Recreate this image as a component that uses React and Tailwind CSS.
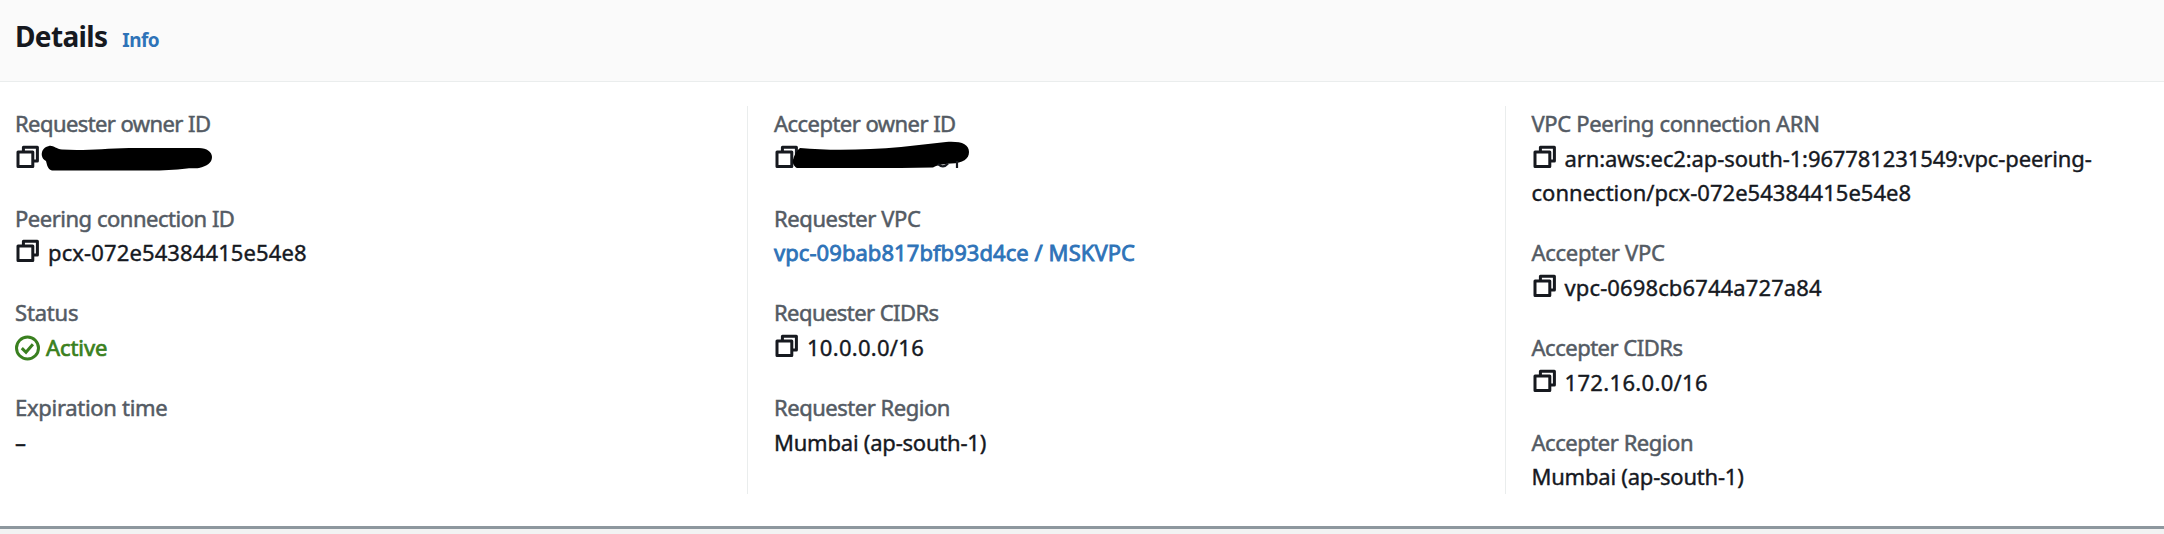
const CopyIcon = () => (
  <svg width="24" height="24" viewBox="0 0 24 24" fill="none" stroke="#16191f" strokeWidth="3" strokeLinejoin="round" className="mr-[9px] inline-block align-[-2px]">
    <path d="M8.4 7V2.3H22.4V16H18.5" />
    <rect x="3" y="7" width="14.8" height="14.6" />
  </svg>
);

const CheckIcon = () => (
  <svg width="26" height="26" viewBox="0 0 26 26" fill="none" stroke="#3a8020" strokeWidth="3" className="mr-[5px] inline-block align-[-5px]">
    <circle cx="12.5" cy="13" r="11" />
    <path d="M6.8 13.1 11 17.2 17.9 9.2" />
  </svg>
);

const Field = ({ label, labelClass, children }) => (
  <div>
    <div className={`text-[#545b64] [-webkit-text-stroke:0.5px] ${labelClass}`}>{label}</div>
    <div>{children}</div>
  </div>
);

const column = "flex flex-col gap-[25.33px]";

export default function App() {
  return (
    <div className="flex h-[534px] w-[2164px] flex-col overflow-hidden bg-[#f2f3f3] font-['Noto_Sans',sans-serif] text-[#16191f]">
      <div className="flex h-[529px] flex-col border-b-3 border-[#8d979e] bg-white">
        <header className="flex h-[82px] items-baseline gap-[15px] border-b border-[#eaeded] bg-[#fafafa] pt-[16px] pl-[15px]">
          <h2 className="text-[28px] leading-[40px] font-bold tracking-[-0.65px]">Details</h2>
          <a className="text-[19px] font-bold tracking-[-0.6px] text-[#2e73b8]">Info</a>
        </header>
        <div className="mt-6 grid h-[388px] grid-cols-[747px_758px_1fr] text-[22px] leading-[34.67px] whitespace-nowrap [-webkit-text-stroke:0.4px]">
          <div className={`${column} pl-[15px]`}>
            <Field label="Requester owner ID" labelClass="tracking-[-0.58px]">
              <div className="relative h-[34.67px]">
                <CopyIcon />
                <svg width="176" height="32" viewBox="0 0 176 32" className="absolute top-[2px] left-[24px]">
                  <path d="M10 3C14 2 17 6 23 6.5C45 8 65 5.5 90 5L160 5C168 5 173 9 173 14C173 20 168 23 160 25C156 26 153 24.5 148 25.5C135 27 125 27.5 110 27.5H13C9 27 8 22 7 18C1 15 1 5 10 3Z" />
                </svg>
              </div>
            </Field>
            <Field label="Peering connection ID" labelClass="tracking-[-0.48px]">
              <CopyIcon /><span className="tracking-[0.12px]">pcx-072e54384415e54e8</span>
            </Field>
            <Field label="Status" labelClass="tracking-[-0.18px]">
              <CheckIcon /><span className="tracking-[-0.08px] text-[#3a8020] [-webkit-text-stroke:0.7px]">Active</span>
            </Field>
            <Field label="Expiration time" labelClass="tracking-[-0.3px]">–</Field>
          </div>
          <div className={`${column} border-l border-[#eaeded] pl-[26px]`}>
            <Field label="Accepter owner ID" labelClass="tracking-[-0.54px]">
              <div className="relative h-[34.67px]">
                <CopyIcon />
                <svg width="184" height="32" viewBox="0 0 184 32" className="absolute top-0 left-[17px]">
                  <path d="M9 7C40 10 75 9 110 6L155 1C170 0 178 3 178 11C178 18 172 22 160 22.5C150 23.5 146 24 142 26.5L110 27H6C3 26 1 21 2 19C3 15 5 10 9 7Z" />
                  <path d="M147 23Q152 28 157 22.5M166 20V27" fill="none" stroke="#16191f" strokeWidth="2.2" />
                </svg>
              </div>
            </Field>
            <Field label="Requester VPC" labelClass="tracking-[-0.4px]">
              <a className="tracking-[0.06px] text-[#2e73b8] [-webkit-text-stroke:0.8px]">vpc-09bab817bfb93d4ce / MSKVPC</a>
            </Field>
            <Field label="Requester CIDRs" labelClass="tracking-[-0.56px]">
              <CopyIcon /><span className="tracking-[0.28px]">10.0.0.0/16</span>
            </Field>
            <Field label="Requester Region" labelClass="tracking-[-0.48px]">
              <span className="tracking-[-0.22px]">Mumbai (ap-south-1)</span>
            </Field>
          </div>
          <div className={`${column} border-l border-[#eaeded] pl-[25.5px]`}>
            <Field label="VPC Peering connection ARN" labelClass="tracking-[-0.33px]">
              <CopyIcon /><span className="tracking-[-0.11px]">arn:aws:ec2:ap-south-1:967781231549:vpc-peering-</span>
              <br />
              <span className="tracking-[0.02px]">connection/pcx-072e54384415e54e8</span>
            </Field>
            <Field label="Accepter VPC" labelClass="tracking-[-0.3px]">
              <CopyIcon /><span className="tracking-[0.12px]">vpc-0698cb6744a727a84</span>
            </Field>
            <Field label="Accepter CIDRs" labelClass="tracking-[-0.49px]">
              <CopyIcon /><span className="tracking-[0.33px]">172.16.0.0/16</span>
            </Field>
            <Field label="Accepter Region" labelClass="tracking-[-0.46px]">
              <span className="tracking-[-0.22px]">Mumbai (ap-south-1)</span>
            </Field>
          </div>
        </div>
      </div>
    </div>
  );
}
